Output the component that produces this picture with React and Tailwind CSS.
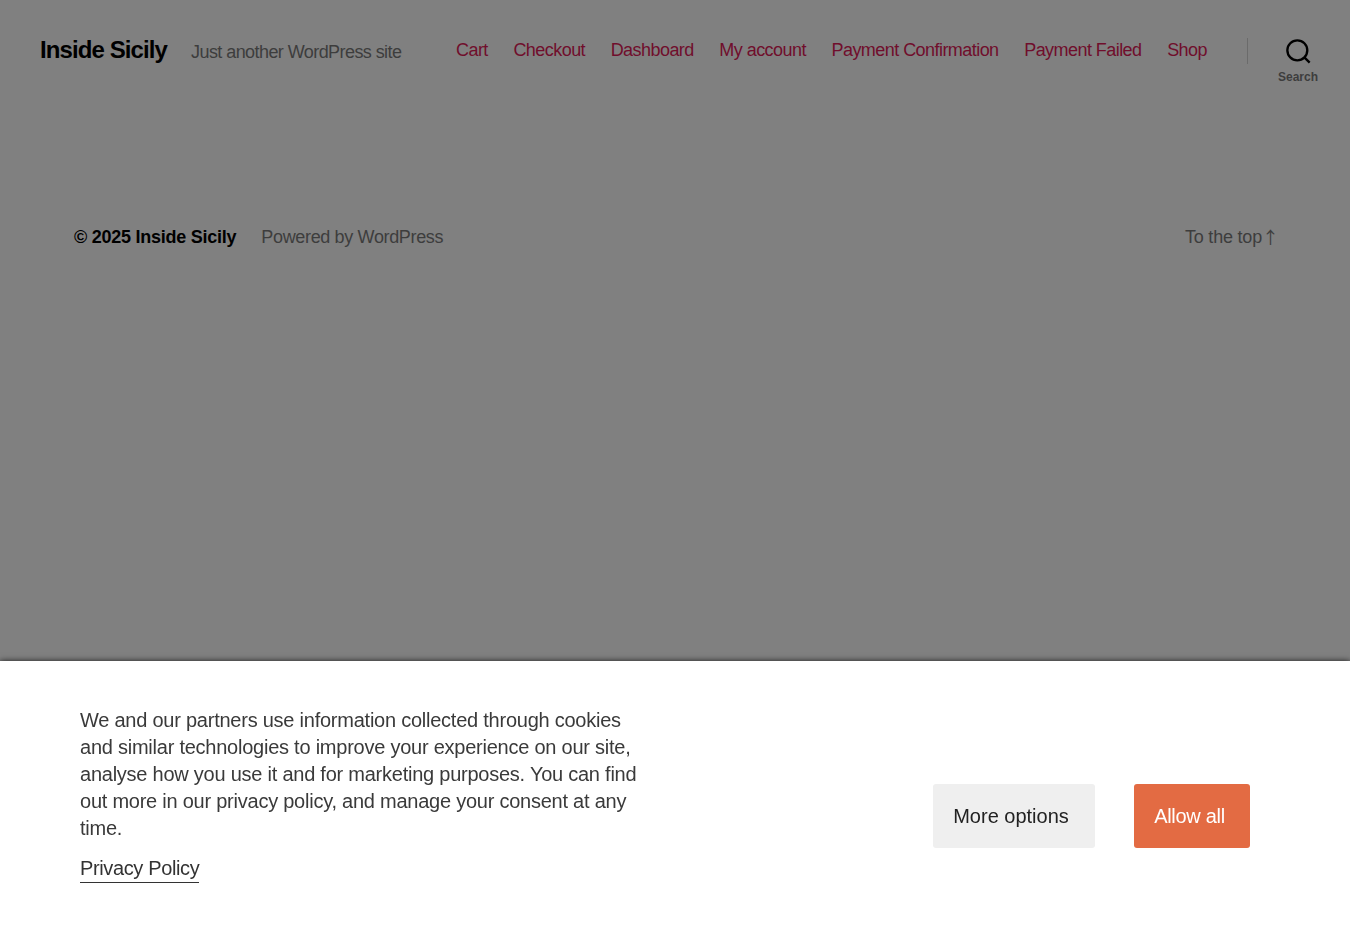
import React from 'react';

const navItems = ['Cart', 'Checkout', 'Dashboard', 'My account', 'Payment Confirmation', 'Payment Failed', 'Shop'];

const SearchIcon = () => (
  <svg width="27" height="27" viewBox="0 0 23 23" fill="none" className="text-black">
    <path
      d="M16.5 16.5 21 21M10.5 19a8.5 8.5 0 1 0 0-17 8.5 8.5 0 0 0 0 17Z"
      stroke="currentColor"
      strokeWidth="2"
    />
  </svg>
);

const App = () => {
  return (
    <div className="h-[940px] overflow-hidden bg-[#808080] font-['Liberation_Sans',Arial,sans-serif]">
      {/* Header */}
      <header className="flex h-[102px] items-start pl-10 pr-[32px]">
        <div className="flex w-[416px] shrink-0 items-baseline pt-[34px]">
          <a className="text-[24px] font-bold leading-[32px] tracking-[-0.9px] text-black">Inside Sicily</a>
          <span className="ml-6 text-[18px] leading-[32px] tracking-[-0.57px] text-[#3d3d3d]">Just another WordPress site</span>
        </div>
        <nav className="flex gap-[25.6px] pt-[38px] text-[18px] leading-[24px] tracking-[-0.55px] text-[#700e2c]">
          {navItems.map((item) => (
            <a key={item} className="whitespace-nowrap">{item}</a>
          ))}
        </nav>
        <div className="ml-auto mt-[38px] h-[26px] w-px bg-[#6b6b6b]"></div>
        <button className="ml-[30px] flex w-10 flex-col items-center pt-[38px]">
          <SearchIcon />
          <span className="mt-[3px] whitespace-nowrap text-[12px] font-bold leading-[18px] text-[#3d3d3d]">Search</span>
        </button>
      </header>

      {/* Footer */}
      <footer className="flex items-center justify-between pl-[74px] pr-[75px] pt-[123px] text-[18px] leading-[24px]">
        <div className="flex gap-[25px]">
          <span className="font-bold tracking-[-0.25px] text-black">© 2025 Inside Sicily</span>
          <a className="tracking-[-0.35px] text-[#3d3d3d]">Powered by WordPress</a>
        </div>
        <a className="flex text-[#3d3d3d] tracking-[-0.2px]">
          To the top
          <span className="ml-[4px] flex w-[9px] justify-center font-['Noto_Sans_CJK_JP',sans-serif] text-[17px] leading-[24px]">↑</span>
        </a>
      </footer>

      {/* Cookie banner */}
      <div className="fixed bottom-0 left-0 right-0 flex h-[279px] items-start justify-between bg-white pl-20 pr-[100px] pt-[46px] shadow-[0_0_6px_rgba(0,0,0,0.8)]">
        <div className="w-[570px] text-[20px] leading-[27px] tracking-[-0.24px] text-[#3a3a3a]">
          <p>We and our partners use information collected through cookies and similar technologies to improve your experience on our site, analyse how you use it and for marketing purposes. You can find out more in our privacy policy, and manage your consent at any time.</p>
          <a className="mt-[13px] inline-block border-b border-[#333] tracking-[-0.37px] text-[#333]">Privacy Policy</a>
        </div>
        <div className="mt-[77px] flex gap-[39px]">
          <button className="h-16 w-[162px] rounded-[3px] bg-[#efefef] pr-[6px] text-[20px] text-[#222]">More options</button>
          <button className="h-16 w-[116px] rounded-[3px] bg-[#e36b43] pr-[5px] text-[20px] tracking-[-0.3px] text-white">Allow all</button>
        </div>
      </div>
    </div>
  );
};

export default App;
